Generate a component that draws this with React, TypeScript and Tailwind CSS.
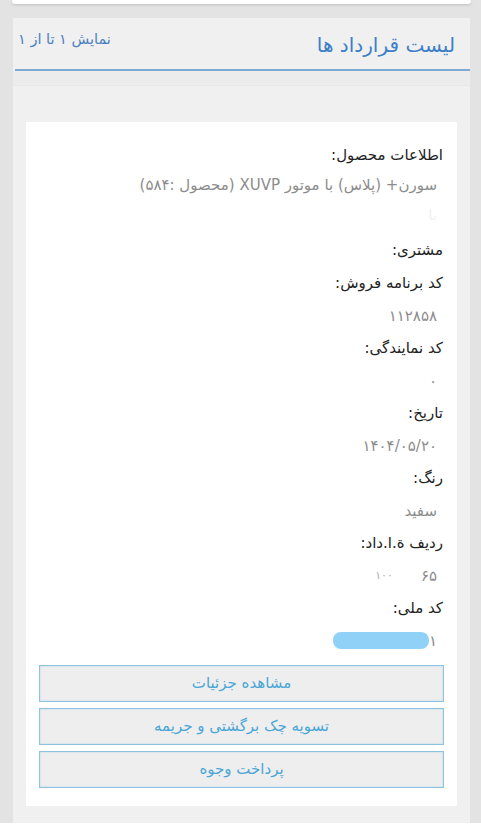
import React from "react";

const Label = ({ children, h = "h-[32.5px]" }: { children: React.ReactNode; h?: string }) => (
  <div className={`${h} flex items-center pr-[1px] text-[15px] text-[#222]`}>{children}</div>
);

const Value = ({ children, h = "h-[32.5px]" }: { children: React.ReactNode; h?: string }) => (
  <div className={`${h} flex items-center pr-[7px] text-[15px] text-[#8c8c8c]`}>{children}</div>
);

const Btn = ({ children }: { children: React.ReactNode }) => (
  <button className="h-[37px] w-full border border-[#8ec3df] bg-[#eeeeee] text-[15px] text-[#4aa6d6] shadow-[inset_0_0_2px_rgba(140,195,225,0.6)]">
    {children}
  </button>
);

export default function App() {
  return (
    <div dir="rtl" className="w-[481px] bg-white" style={{ fontFamily: '"DejaVu Sans", "Noto Sans", sans-serif' }}>
      <div className="bg-[#e3e3e3] pl-[13px] pr-[11px] pb-0 h-[823px] flex flex-col">
        <div className="h-[4px] bg-white rounded-b-[3px] shadow-[0_1px_3px_rgba(0,0,0,0.15)] mr-[-1px] ml-[-1px]" />
        <div className="mt-[14px] flex-1 bg-[#f0f0f0] flex flex-col">
          <div className="h-[51px] flex items-start justify-between pr-[15px] pl-[5px]">
            <div className="mt-[12px] text-[20px] text-[#3d7fc6]">لیست قرارداد ها</div>
            <div className="mt-[11px] text-[14.5px] text-[#4b80c2]">نمایش ۱ تا از ۱</div>
          </div>
          <div className="h-[2px] bg-[#7fa8d2] mr-0 ml-[2px]" />
          <div className="h-[15px] bg-[#ececec] border-b border-[#e8e8e8]" />
          <div className="flex-1 px-[13px] pt-[36px] pb-[15px]">
            <div className="bg-white px-[13px] pt-[18px] pb-[18px] flex flex-col">
              <Label h="h-[30px]">اطلاعات محصول:</Label>
              <div className="pr-[7px] text-[15px] leading-[30px] text-[#8c8c8c]">
                سورن+ (پلاس) با موتور XUVP (محصول :۵۸۴)
              </div>
              <div className="relative h-[30px] pr-[7px] text-[15px] leading-[30px] text-[#8c8c8c]">
                <span className="text-[#b5b5b5]">با</span>
                <span className="absolute right-[0px] top-[4px] h-[22px] w-[55px] bg-white/80 blur-[2px]" />
              </div>
              <Label h="h-[34px] mt-[3px]">مشتری:</Label>
              <Label>کد برنامه فروش:</Label>
              <Value>۱۱۲۸۵۸</Value>
              <Label>کد نمایندگی:</Label>
              <Value>۰</Value>
              <Label>تاریخ:</Label>
              <Value>۱۴۰۴/۰۵/۲۰</Value>
              <Label>رنگ:</Label>
              <Value>سفید</Value>
              <Label>ردیف ة.ا.داد:</Label>
              <Value>
                <span>۶۵</span>
                <span className="inline-block w-[28px]" />
                <span className="text-[11px] text-[#b0b0b0]">۱۰۰</span>
              </Value>
              <Label>کد ملی:</Label>
              <Value>
                <span className="relative inline-flex items-center">
                  <span>۶۱</span>
                  <span className="absolute right-[8px] top-[2px] h-[17px] w-[96px] rounded-[8px] bg-[#8fd1f7] blur-[0.6px]" />
                </span>
              </Value>
              <div className="mt-[8px] flex flex-col gap-[6px]">
                <Btn>مشاهده جزئیات</Btn>
                <Btn>تسویه چک برگشتی و جریمه</Btn>
                <Btn>پرداخت وجوه</Btn>
              </div>
            </div>
          </div>
        </div>
      </div>
    </div>
  );
}
